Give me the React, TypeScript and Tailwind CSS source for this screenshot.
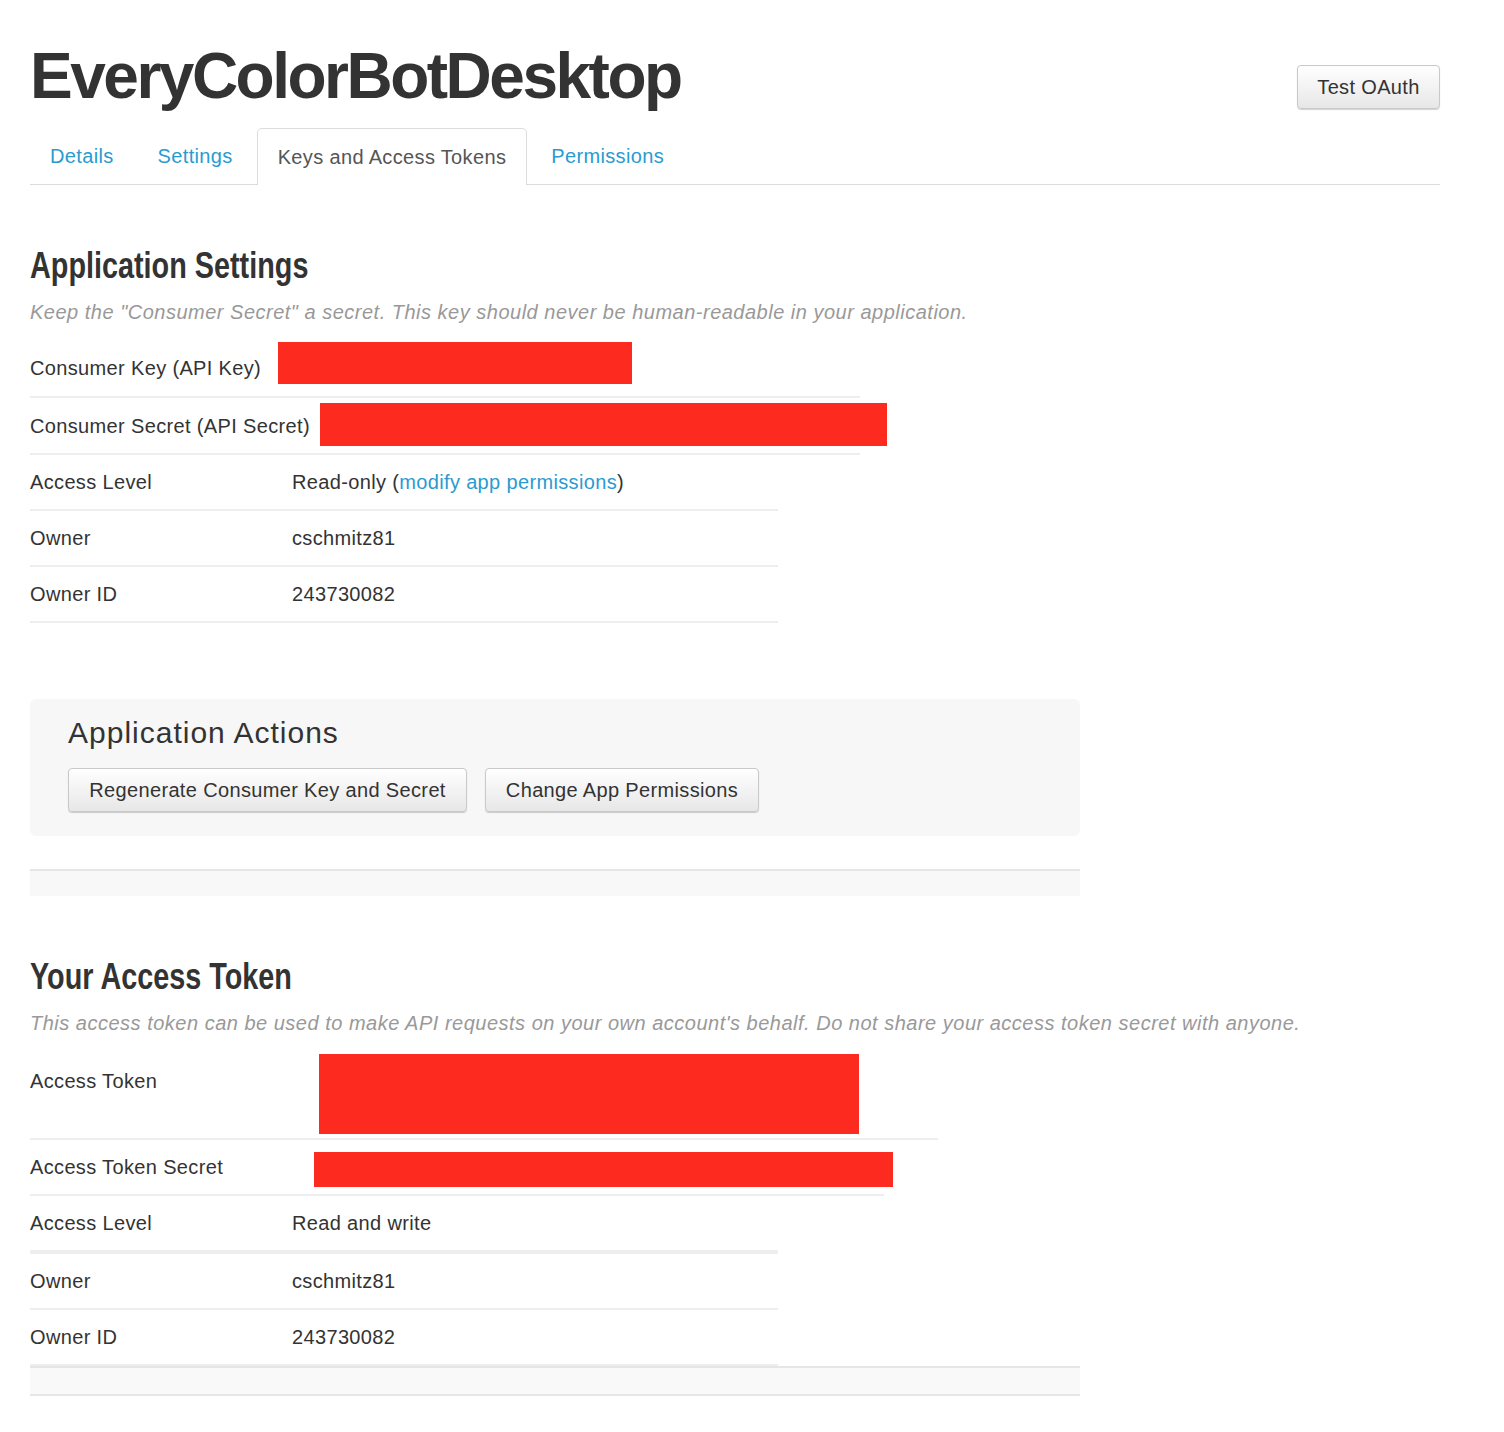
const body = "font-['Liberation_Sans',Arial,sans-serif]";

function Redact({ className }: { className: string }) {
  return <div className={`bg-[#fd2b1f] shrink-0 self-start ${className}`} />;
}

function Button({ children, className = '' }: { children: React.ReactNode; className?: string }) {
  return (
    <button
      className={`h-[44px] rounded-[4px] border border-[#c9c9c9] bg-gradient-to-b from-white to-[#e7e7e7] px-0 text-[20px] tracking-[0.35px] text-[#333] shadow-[0_1px_1px_rgba(0,0,0,0.18)] ${className}`}
    >
      {children}
    </button>
  );
}

function Row({
  label,
  value,
  className = '',
}: {
  label: string;
  value: React.ReactNode;
  className?: string;
}) {
  return (
    <div className={`flex items-center border-b-2 border-[#eeeeee] ${className}`}>
      <div className="w-[262px] shrink-0">{label}</div>
      <div>{value}</div>
    </div>
  );
}

function SectionTitle({ children }: { children: React.ReactNode }) {
  return (
    <h2 className="mt-[62px] h-[38px] origin-left scale-x-[0.8] whitespace-nowrap text-[36px] font-bold leading-[38px] tracking-normal text-[#333]">
      {children}
    </h2>
  );
}

function Note({ children }: { children: React.ReactNode }) {
  return <p className="mt-[15px] text-[20px] italic leading-[24px] tracking-[0.5px] text-[#999]">{children}</p>;
}

function Strip({ className = '' }: { className?: string }) {
  return <div className={`w-[1050px] border-t-2 border-[#e6e6e6] bg-[#f8f8f8] ${className}`} />;
}

export default function App() {
  const tabs = ['Details', 'Settings', 'Keys and Access Tokens', 'Permissions'];
  const active = 'Keys and Access Tokens';

  return (
    <div className={`${body} min-h-[1432px] bg-white pl-[30px] pr-[64px] pt-[44px] text-[20px] tracking-[0.35px] text-[#333]`}>
      {/* Header */}
      <div className="flex items-start justify-between">
        <h1 className="text-[64px] font-bold leading-[64px] tracking-[-2.5px] text-[#333]">
          EveryColorBotDesktop
        </h1>
        <Button className="mt-[21px] w-[143px]">Test OAuth</Button>
      </div>

      {/* Tabs */}
      <div className="mt-[19px] flex h-[57px] border-b border-[#dddddd] text-[20px]">
        {tabs.map(t =>
          t === active ? (
            <div
              key={t}
              className="mr-[4px] flex h-[57px] items-center rounded-t-[5px] border border-b-0 border-[#dddddd] bg-white px-[20px] text-[#555]"
            >
              {t}
            </div>
          ) : (
            <div key={t} className="mr-[4px] flex h-[56px] items-center px-[20px] text-[#2a9bd1]">
              {t}
            </div>
          ),
        )}
      </div>

      {/* Application Settings */}
      <SectionTitle>Application Settings</SectionTitle>
      <Note>Keep the "Consumer Secret" a secret. This key should never be human-readable in your application.</Note>

      <div className="mt-[16px]">
        <div className="flex h-[58px] w-[830px] items-center border-b-2 border-[#eeeeee]">
          <div className="w-[248px] shrink-0 whitespace-nowrap">Consumer Key (API Key)</div>
          <Redact className="mt-[2px] h-[42px] w-[354px]" />
        </div>
        <div className="flex h-[57px] w-[830px] items-center border-b-2 border-[#eeeeee]">
          <div className="w-[290px] shrink-0 whitespace-nowrap">Consumer Secret (API Secret)</div>
          <Redact className="mt-[5px] h-[43px] w-[567px]" />
        </div>
        <Row
          className="h-[56px] w-[748px]"
          label="Access Level"
          value={
            <>
              Read-only (<span className="text-[#2a9bd1]">modify app permissions</span>)
            </>
          }
        />
        <Row className="h-[56px] w-[748px]" label="Owner" value="cschmitz81" />
        <Row className="h-[56px] w-[748px]" label="Owner ID" value="243730082" />
      </div>

      {/* Application Actions */}
      <div className="mt-[76px] h-[137px] w-[1050px] rounded-[6px] bg-[#f7f7f7] pl-[38px] pt-[16px]">
        <h3 className="h-[36px] text-[30px] leading-[36px] tracking-[1px] text-[#333]">Application Actions</h3>
        <div className="mt-[17px] flex gap-[18px]">
          <Button className="w-[399px]">Regenerate Consumer Key and Secret</Button>
          <Button className="w-[274px]">Change App Permissions</Button>
        </div>
      </div>
      <Strip className="mt-[33px] h-[27px]" />

      {/* Your Access Token */}
      <SectionTitle>Your Access Token</SectionTitle>
      <Note>
        This access token can be used to make API requests on your own account's behalf. Do not share your access
        token secret with anyone.
      </Note>

      <div className="mt-[17px]">
        <div className="flex h-[88px] w-[908px] items-start border-b-2 border-[#eeeeee]">
          <div className="w-[289px] shrink-0 pt-[17px] leading-[24px]">Access Token</div>
          <Redact className="mt-[2px] h-[80px] w-[540px]" />
        </div>
        <div className="flex h-[56px] w-[854px] items-center border-b-2 border-[#eeeeee]">
          <div className="w-[284px] shrink-0">Access Token Secret</div>
          <Redact className="mt-[12px] h-[35px] w-[579px]" />
        </div>
        <div className="flex h-[58px] w-[748px] items-center border-b-4 border-[#eeeeee]">
          <div className="w-[262px] shrink-0">Access Level</div>
          <div>Read and write</div>
        </div>
        <Row className="h-[56px] w-[748px]" label="Owner" value="cschmitz81" />
        <Row className="h-[56px] w-[748px]" label="Owner ID" value="243730082" />
      </div>
      <Strip className="h-[30px] border-b-2 border-b-[#e6e6e6] bg-[#f9f9f9]" />
    </div>
  );
}
